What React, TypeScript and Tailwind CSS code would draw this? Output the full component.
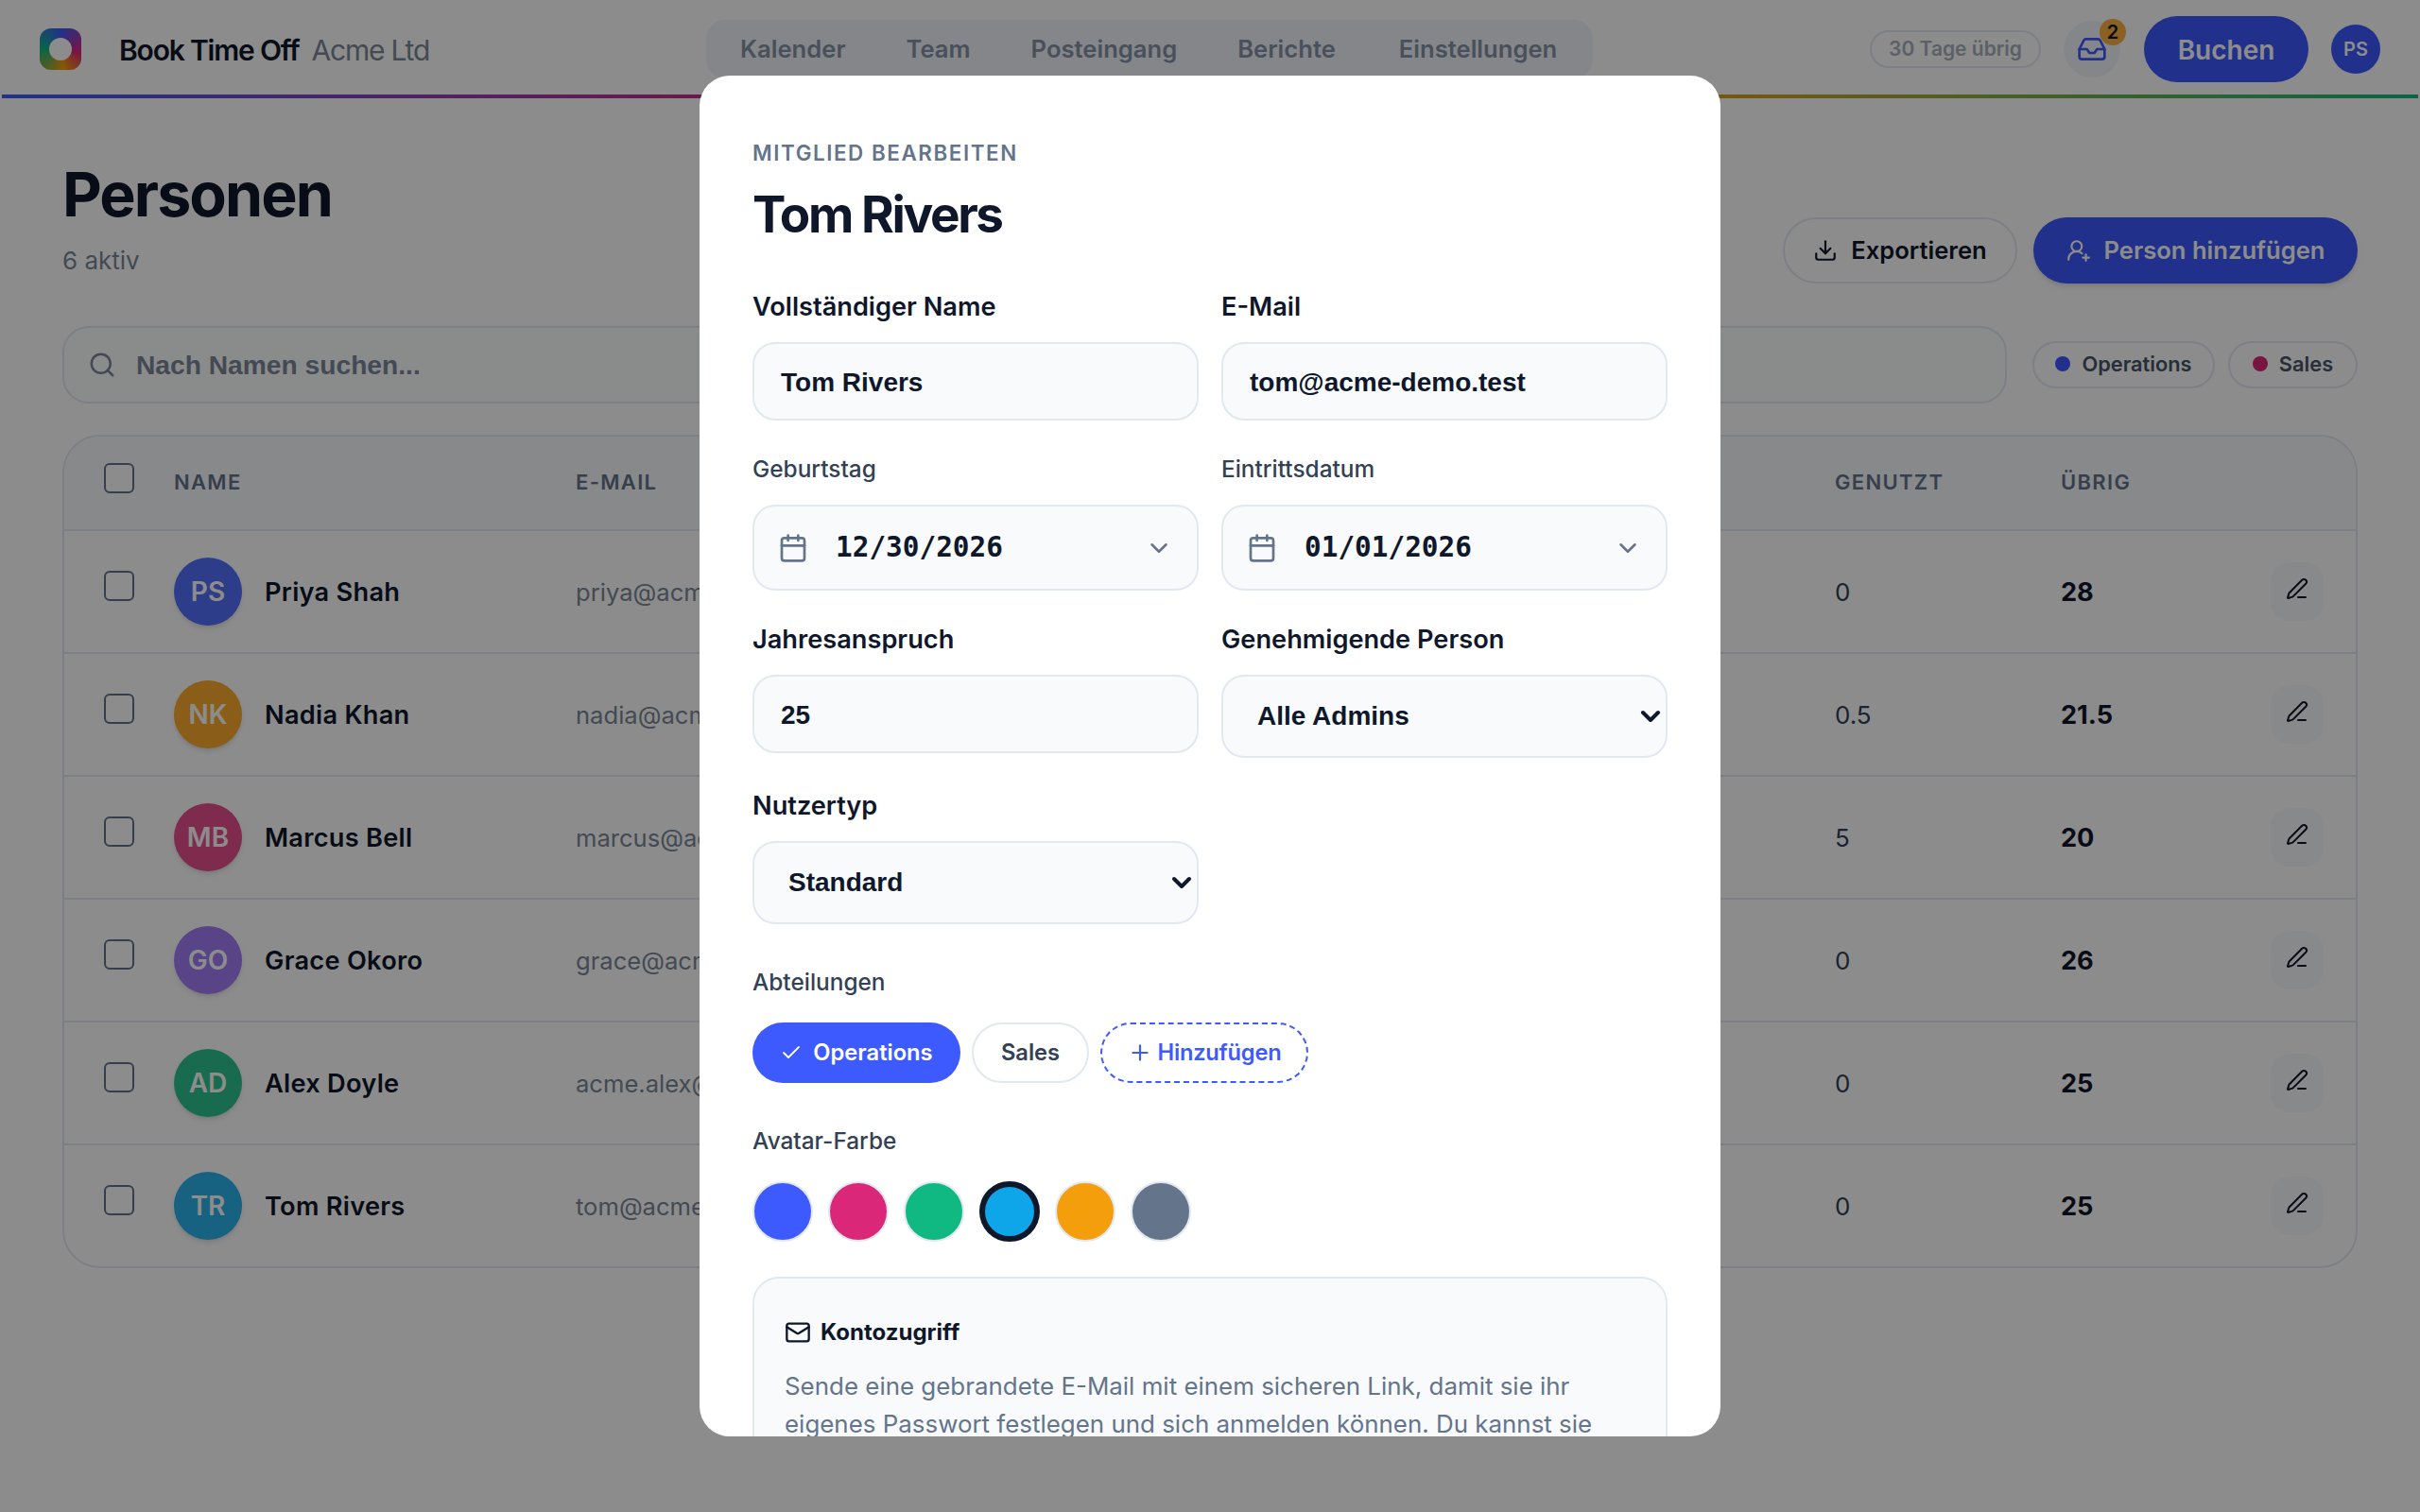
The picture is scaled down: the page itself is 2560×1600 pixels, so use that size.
import { Calendar, Check, ChevronDown, Download, Inbox, Mail, PenLine, Plus, Search, UserRoundPlus } from 'lucide-react';
import type { ReactNode } from 'react';

const people = [
  { initials: 'PS', name: 'Priya Shah', email: 'priya@acme-demo.test', used: '0', left: '28', color: 'bg-[#5570fb]' },
  { initials: 'NK', name: 'Nadia Khan', email: 'nadia@acme-demo.test', used: '0.5', left: '21.5', color: 'bg-[#fbab2c]' },
  { initials: 'MB', name: 'Marcus Bell', email: 'marcus@acme-demo.test', used: '5', left: '20', color: 'bg-[#e74f8f]' },
  { initials: 'GO', name: 'Grace Okoro', email: 'grace@acme-demo.test', used: '0', left: '26', color: 'bg-[#a07cf6]' },
  { initials: 'AD', name: 'Alex Doyle', email: 'acme.alex@acme-demo.test', used: '0', left: '25', color: 'bg-[#2cc391]' },
  { initials: 'TR', name: 'Tom Rivers', email: 'tom@acme-demo.test', used: '0', left: '25', color: 'bg-[#2cb2ec]' },
];

const swatches = ['bg-[#3d5afe]', 'bg-[#db2777]', 'bg-[#10b981]', 'bg-[#0ea5e9]', 'bg-[#f59e0b]', 'bg-[#64748b]'];

const rowGrid = 'grid grid-cols-[74px_425px_1332px_239px_222px_56px] items-center pl-[42px]';
const inputFont = "font-['Liberation_Sans',Arial,sans-serif] text-[28px] font-bold text-[#0f172a]";

function Field({ label, children, small }: { label: string; children: ReactNode; small?: boolean }) {
  return (
    <div className="flex flex-col">
      <label className={small ? 'mb-5 h-9 text-[24.4px] leading-9 font-medium text-[#334155]' : 'mb-[19px] h-9 text-[27.2px] leading-9 font-semibold text-[#0f172a]'}>{label}</label>
      {children}
    </div>
  );
}

function TextValue({ value }: { value: string }) {
  return <div className={`flex h-[83px] items-center rounded-[24px] border-2 border-[#e2e8f0] bg-[#f8fafc] px-[28px] pt-[2px] ${inputFont}`}>{value}</div>;
}

function DateValue({ value }: { value: string }) {
  return (
    <div className="flex h-[91px] items-center rounded-[24px] border-2 border-[#e2e8f0] bg-[#f8fafc] pr-[25px] pl-[25px] text-[#0f172a]">
      <Calendar size={32} strokeWidth={2} className="text-[#64748b]" />
      <span className="ml-[29px] font-['DejaVu_Sans_Mono',monospace] text-[29.4px] font-bold">{value}</span>
      <ChevronDown size={30} strokeWidth={2} className="ml-auto text-[#64748b]" />
    </div>
  );
}

function NativeSelect({ value }: { value: string }) {
  return (
    <div className="relative">
      <select defaultValue={value} className={`h-[88px] w-full appearance-none rounded-[24px] border-2 border-[#e2e8f0] bg-[#f8fafc] pr-10 pl-[36px] ${inputFont}`}>
        <option>{value}</option>
      </select>
      <ChevronDown size={32} strokeWidth={3} className="pointer-events-none absolute top-[28px] right-[2px] text-[#0f172a]" />
    </div>
  );
}

function EditModal() {
  return (
    <div className="absolute inset-0 flex items-center justify-center bg-black/45">
      <div className="h-[1440px] w-[1080px] overflow-hidden rounded-[32px] bg-white px-14 pt-16">
        <p className="text-[22.4px] leading-9 font-semibold tracking-[0.07em] text-[#64748b]">MITGLIED BEARBEITEN</p>
        <h2 className="mt-4 text-[53px] leading-[62px] font-bold tracking-[-0.045em] text-[#0f172a]">Tom Rivers</h2>

        <div className="mt-[49px] grid grid-cols-2 gap-x-6">
          <Field label="Vollständiger Name"><TextValue value="Tom Rivers" /></Field>
          <Field label="E-Mail"><TextValue value="tom@acme-demo.test" /></Field>
        </div>
        <div className="mt-[33px] grid grid-cols-2 gap-x-6">
          <Field label="Geburtstag" small><DateValue value="12/30/2026" /></Field>
          <Field label="Eintrittsdatum" small><DateValue value="01/01/2026" /></Field>
        </div>
        <div className="mt-[34px] grid grid-cols-2 items-start gap-x-6">
          <Field label="Jahresanspruch"><TextValue value="25" /></Field>
          <Field label="Genehmigende Person"><NativeSelect value="Alle Admins" /></Field>
        </div>
        <div className="mt-[33px] grid grid-cols-2 gap-x-6">
          <Field label="Nutzertyp"><NativeSelect value="Standard" /></Field>
        </div>

        <p className="mt-[43px] h-9 text-[24.4px] leading-9 font-medium text-[#334155]">Abteilungen</p>
        <div className="mt-[25px] flex gap-3">
          <span className="flex h-16 w-[220px] items-center justify-center gap-[11px] rounded-full bg-[#3d5afe] text-[23.7px] font-semibold text-white">
            <Check size={24} strokeWidth={1.8} />Operations
          </span>
          <span className="flex h-16 w-[124px] items-center justify-center rounded-full border-2 border-[#e2e8f0] bg-white text-[23.7px] font-semibold text-[#334155]">Sales</span>
          <span className="flex h-16 w-[220px] items-center justify-center gap-[6px] rounded-full border-2 border-dashed border-[#3d5afe] bg-white text-[23.7px] font-semibold tracking-[-0.01em] text-[#3d5afe]">
            <Plus size={26} strokeWidth={2} />Hinzufügen
          </span>
        </div>

        <p className="mt-[43px] h-9 text-[24.4px] leading-9 font-medium text-[#334155]">Avatar-Farbe</p>
        <div className="mt-[25px] flex gap-4">
          {swatches.map((color, i) => (
            <span key={color} className={`size-16 rounded-full ${i === 3 ? 'border-[6px] border-[#0f172a]' : 'border-2 border-[#e2e8f0]'} ${color}`} />
          ))}
        </div>

        <div className="mt-[37px] h-[300px] rounded-[28px] border-2 border-[#e2e8f0] bg-[#f8fafc] px-[32px] pt-[39px]">
          <div className="flex items-center gap-[10px] text-[24px] leading-9 font-bold text-[#0f172a]">
            <Mail size={28} strokeWidth={2} />Kontozugriff
          </div>
          <p className="mt-[19px] text-[25.92px] leading-10 text-[#64748b]">
            Sende eine gebrandete E-Mail mit einem sicheren Link, damit sie ihr eigenes Passwort festlegen und sich anmelden können. Du kannst sie
          </p>
        </div>
      </div>
    </div>
  );
}

export default function App() {
  return (
    <div className="relative h-[1600px] overflow-hidden bg-white px-[2px] font-['Inter','Liberation_Sans',sans-serif] text-[#0f172a]">
      <header className="h-[104px] border-b-4 border-transparent [border-image:linear-gradient(90deg,#3d5afe,#db2777,#f59e0b,#10b981)_1]">
        <div className="flex h-full items-center px-[40px] pt-1">
          <div className="flex size-[44px] items-center justify-center rounded-[12px] bg-[conic-gradient(#3d5afe,#db2777_100deg,#f59e0b_170deg,#10b981_270deg,#3d5afe)]">
            <span className="size-6 rounded-full bg-white" />
          </div>
          <span className="ml-[40px] pt-[2px] text-[30px] font-semibold tracking-[-0.04em]">Book Time Off</span>
          <span className="ml-[13px] pt-[2px] text-[30px] tracking-[-0.04em] text-[#7b8796]">Acme Ltd</span>

          <nav className="ml-[293px] flex h-[62px] items-center rounded-[20px] bg-[#f1f5f9] pr-[6px] pl-1 text-[25.6px] font-semibold text-[#8593a6]">
            <span className="px-8">Kalender</span>
            <span className="px-8">Team</span>
            <span className="px-8">Posteingang</span>
            <span className="px-8">Berichte</span>
            <span className="ml-[3px] px-8">Einstellungen</span>
          </nav>

          <span className="ml-auto flex h-10 w-[181px] items-center justify-center rounded-full border-2 border-[#e2e8f0] text-[21px] font-semibold text-[#a8afba]">30 Tage übrig</span>
          <span className="relative ml-6 flex size-[60px] items-center justify-center rounded-full bg-[#f1f5f9] text-[#3d5afe]">
            <Inbox size={32} strokeWidth={2} />
            <span className="absolute -top-[2px] -right-[6px] flex size-[28px] items-center justify-center rounded-full bg-[#fbb040] text-[20px] font-semibold text-[#0f172a]">2</span>
          </span>
          <span className="ml-[25px] flex h-[70px] w-[174px] items-center justify-center rounded-full bg-[#3d5afe] pt-[2px] text-[28px] font-semibold text-white">Buchen</span>
          <span className="ml-[24px] flex size-[52px] items-center justify-center rounded-full bg-[#3d5afe] text-[20px] font-semibold text-white">PS</span>
        </div>
      </header>

      <main className="px-[64px]">
        <div className="flex items-end justify-between pt-[63px]">
          <div>
            <h1 className="text-[64.5px] leading-[78px] font-bold tracking-[-0.03em]">Personen</h1>
            <p className="mt-[11px] mb-[3px] text-[26px] leading-10 text-[#7b8796]">6 aktiv</p>
          </div>
          <div className="-mb-[1px] flex gap-[17px]">
            <button className="flex h-[70px] w-[248px] items-center justify-center gap-[14px] rounded-full border-2 border-[#e2e8f0] text-[25.6px] font-semibold">
              <Download size={26} strokeWidth={2} />Exportieren
            </button>
            <button className="flex h-[70px] w-[343px] items-center justify-center gap-[14px] rounded-full bg-[#3d5afe] text-[25.6px] font-semibold text-white shadow-md">
              <UserRoundPlus size={26} strokeWidth={2} />Person hinzufügen
            </button>
          </div>
        </div>

        <div className="mt-[46px] flex items-center gap-[27px]">
          <div className="flex h-[82px] flex-1 items-center gap-[21px] rounded-[28px] border-2 border-[#e2e8f0] bg-[#fbfdfe] px-[25px] font-['Liberation_Sans',Arial,sans-serif] text-[28.2px] font-bold text-[#7c8798]">
            <Search size={30} strokeWidth={2} />Nach Namen suchen...
          </div>
          <span className="flex h-[50px] w-[193px] items-center justify-center gap-[12px] rounded-full border-2 border-[#e2e8f0] pb-[2px] text-[21.8px] font-semibold text-[#475569]">
            <span className="size-4 rounded-full bg-[#3d5afe]" />Operations
          </span>
          <span className="-ml-[13px] flex h-[50px] w-[137px] items-center justify-center gap-[12px] rounded-full border-2 border-[#e2e8f0] pb-[2px] text-[21.8px] font-semibold text-[#475569]">
            <span className="size-4 rounded-full bg-[#db2777]" />Sales
          </span>
        </div>

        <div className="mt-[33px] overflow-hidden rounded-[40px] border-2 border-[#e2e8f0] bg-white">
          <div className={`${rowGrid} h-[98px] bg-[#f8fafc] pb-[2px] text-[22px] font-semibold tracking-[0.06em] text-[#64748b]`}>
            <span className="-mt-[8px] size-8 rounded-[6px] border-2 border-[#64748b] bg-white" />
            <span>NAME</span>
            <span>E-MAIL</span>
            <span>GENUTZT</span>
            <span>ÜBRIG</span>
            <span />
          </div>
          {people.map((p) => (
            <div key={p.initials} className={`${rowGrid} h-[130px] border-t-2 border-[#e2e8f0]`}>
              <span className="-mt-3 size-8 rounded-[6px] border-2 border-[#64748b] bg-white" />
              <div className="flex items-center gap-[24px]">
                <span className={`flex size-[72px] items-center justify-center rounded-full text-[28px] font-semibold text-white shadow-md ${p.color}`}>{p.initials}</span>
                <span className="pt-[2px] text-[27.2px] font-semibold tracking-[0.01em]">{p.name}</span>
              </div>
              <span className="pt-[2px] text-[25.6px] text-[#7b8796]">{p.email}</span>
              <span className="text-[26px] text-[#334155]">{p.used}</span>
              <span className="pt-[2px] text-[27.2px] font-bold">{p.left}</span>
              <span className="flex h-[62px] w-14 items-center justify-center rounded-[20px] bg-[#f8fafc]">
                <PenLine size={24} strokeWidth={2} className="-mt-[6px]" />
              </span>
            </div>
          ))}
        </div>
      </main>

      <EditModal />
    </div>
  );
}
